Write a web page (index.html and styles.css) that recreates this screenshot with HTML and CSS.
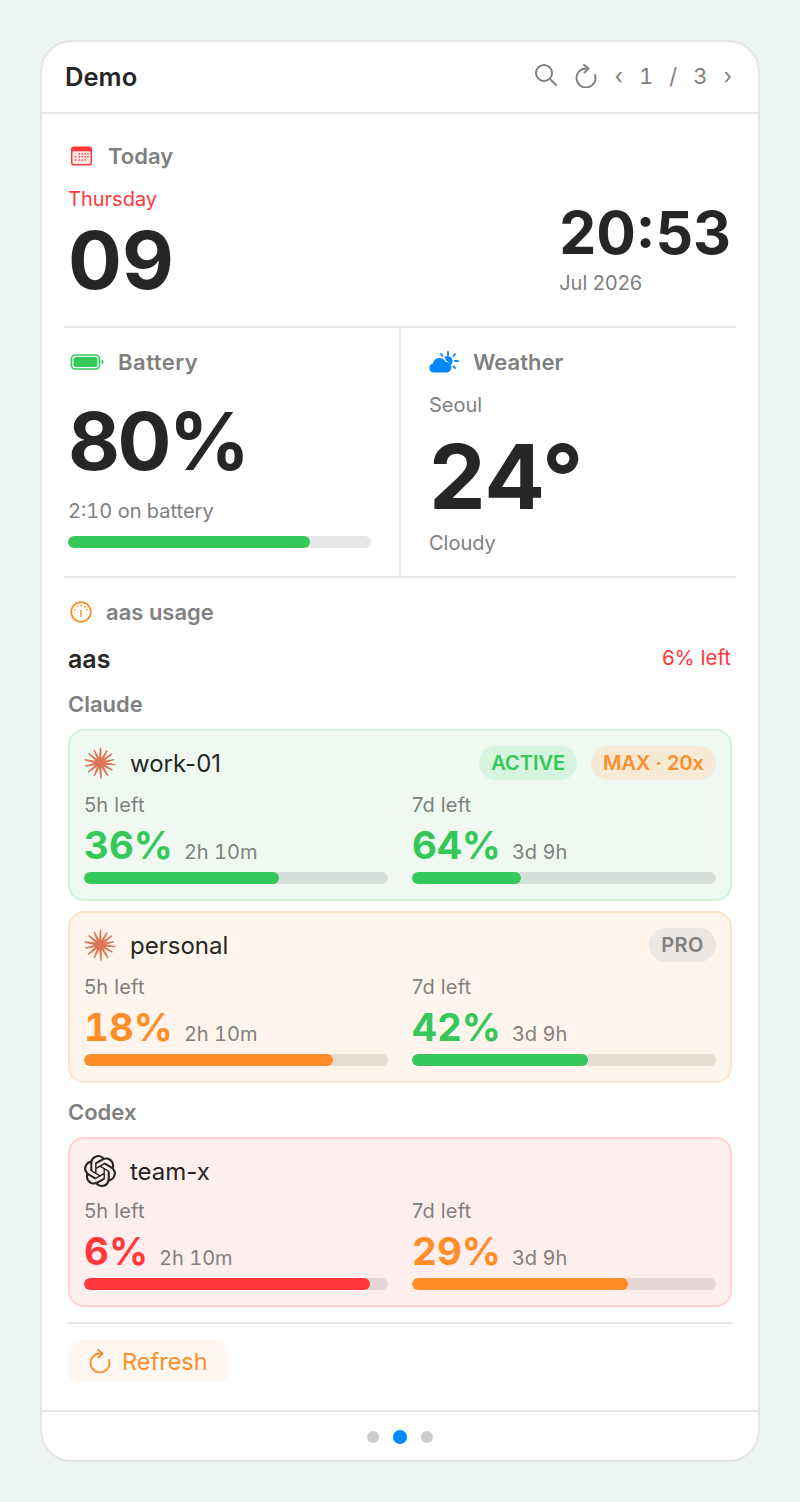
FILE: index.html
```html
<!DOCTYPE html>
<html lang="en">
<head>
    <meta charset="UTF-8">
    <meta name="viewport" content="width=device-width, initial-scale=1.0">
    <title>Demo</title>
    <link rel="stylesheet" href="styles.css">
</head>
<body>
    <svg class="defs" width="0" height="0">
        <symbol id="claude-star" viewBox="0 0 32 32">
            <g fill="#d97757">
                <path transform="rotate(2 16 16)" d="M14.5 16 15.3 .9Q16 .3 16.7 .9L17.5 16Z"/>
                <path transform="rotate(30 16 16)" d="M14.5 16 15.3 1.8Q16 1.2 16.7 1.8L17.5 16Z"/>
                <path transform="rotate(52 16 16)" d="M14.5 16 15.3 .9Q16 .3 16.7 .9L17.5 16Z"/>
                <path transform="rotate(76 16 16)" d="M14.5 16 15.3 1.8Q16 1.2 16.7 1.8L17.5 16Z"/>
                <path transform="rotate(96 16 16)" d="M14.5 16 15.3 .6Q16 0 16.7 .6L17.5 16Z"/>
                <path transform="rotate(120 16 16)" d="M14.5 16 15.3 1.8Q16 1.2 16.7 1.8L17.5 16Z"/>
                <path transform="rotate(148 16 16)" d="M14.5 16 15.3 .9Q16 .3 16.7 .9L17.5 16Z"/>
                <path transform="rotate(176 16 16)" d="M14.5 16 15.3 .6Q16 0 16.7 .6L17.5 16Z"/>
                <path transform="rotate(204 16 16)" d="M14.5 16 15.3 1.8Q16 1.2 16.7 1.8L17.5 16Z"/>
                <path transform="rotate(232 16 16)" d="M14.5 16 15.3 .9Q16 .3 16.7 .9L17.5 16Z"/>
                <path transform="rotate(258 16 16)" d="M14.5 16 15.3 .9Q16 .3 16.7 .9L17.5 16Z"/>
                <path transform="rotate(282 16 16)" d="M14.5 16 15.3 .6Q16 0 16.7 .6L17.5 16Z"/>
                <path transform="rotate(310 16 16)" d="M14.5 16 15.3 1.2Q16 .6 16.7 1.2L17.5 16Z"/>
                <path transform="rotate(336 16 16)" d="M14.5 16 15.3 1.8Q16 1.2 16.7 1.8L17.5 16Z"/>
            </g>
        </symbol>
        <symbol id="reload" viewBox="0 0 22 24">
            <path d="M11 4.5A9.5 9.5 0 1 0 20 11" fill="none" stroke="currentColor" stroke-width="1.9" stroke-linecap="round"/>
            <path d="M9 .8 13.5 4.5 9.5 8.5" fill="none" stroke="currentColor" stroke-width="1.9" stroke-linecap="round" stroke-linejoin="round"/>
        </symbol>
    </svg>

    <div class="widget">
        <div class="topbar">
            <h1>Demo</h1>
            <div class="topbar-tools">
                <svg class="tool-icon search-icon" viewBox="1 1 22 22" fill="none" stroke="#808080" stroke-width="2" stroke-linecap="round">
                    <circle cx="10" cy="10" r="8"/>
                    <line x1="16" y1="16" x2="22" y2="22"/>
                </svg>
                <svg class="tool-icon reload-icon"><use href="#reload"/></svg>
                <div class="pager">
                    <span>‹</span><span>1</span><span>/</span><span>3</span><span>›</span>
                </div>
            </div>
        </div>

        <div class="content">
            <div class="today">
                <div class="section-title">
                    <svg class="icon-calendar" viewBox="0 0 22 20">
                        <rect x="0" y="0" width="22" height="20" rx="3" fill="#ff383c"/>
                        <rect x="1.5" y="5" width="19" height="13.5" rx="1.5" fill="#ffe9e9"/>
                        <g fill="#ff383c">
                            <rect x="8" y="7" width="1.5" height="1.5"/><rect x="11" y="7" width="1.5" height="1.5"/><rect x="14" y="7" width="1.5" height="1.5"/><rect x="17" y="7" width="1.5" height="1.5"/>
                            <rect x="4" y="10" width="1.5" height="1.5"/><rect x="8" y="10" width="1.5" height="1.5"/><rect x="11" y="10" width="1.5" height="1.5"/><rect x="14" y="10" width="1.5" height="1.5"/><rect x="17" y="10" width="1.5" height="1.5"/>
                            <rect x="4" y="13.5" width="1.5" height="1.5"/><rect x="8" y="13.5" width="1.5" height="1.5"/><rect x="11" y="13.5" width="1.5" height="1.5"/><rect x="14" y="13.5" width="1.5" height="1.5"/>
                        </g>
                    </svg>
                    <span>Today</span>
                </div>
                <div class="today-body">
                    <div>
                        <div class="weekday">Thursday</div>
                        <div class="day-num">09</div>
                    </div>
                    <div class="today-right">
                        <div class="clock">20:53</div>
                        <div class="month">Jul 2026</div>
                    </div>
                </div>
            </div>

            <div class="split">
                <div class="split-cell battery">
                    <div class="section-title">
                        <svg class="icon-battery" viewBox="0 0 33 16">
                            <rect x="1" y="1" width="28" height="14" rx="4" fill="none" stroke="#34c759" stroke-width="1.6"/>
                            <rect x="3" y="3" width="24" height="10" rx="2.2" fill="#34c759"/>
                            <path d="M31 5.5 C32.5 6 33 7 33 8 C33 9 32.5 10 31 10.5Z" fill="#34c759"/>
                        </svg>
                        <span class="battery-label">Battery</span>
                    </div>
                    <div class="big-num">80%</div>
                    <div class="muted battery-note">2:10 on battery</div>
                    <div class="track battery-track"><div class="fill green" style="width: 80%"></div></div>
                </div>
                <div class="split-cell weather">
                    <div class="section-title weather-title">
                        <svg class="icon-weather" viewBox="0 0 30 22">
                            <g stroke="#0088ff" stroke-width="1.8" stroke-linecap="round">
                                <line x1="19" y1="1" x2="19" y2="4"/>
                                <line x1="12" y1="3" x2="13.5" y2="5"/>
                                <line x1="26" y1="3" x2="24.5" y2="5"/>
                                <line x1="29" y1="10" x2="26" y2="10"/>
                                <line x1="26" y1="17" x2="24.5" y2="15.5"/>
                            </g>
                            <path d="M15 6.5a5 5 0 0 1 8.5 4 5 5 0 0 1-2.7 4.4 5 5 0 0 0-3.3-5 6.5 6.5 0 0 0-2.5-3.4z" fill="#0088ff"/>
                            <path d="M5 21.5a4.6 4.6 0 0 1-1-9.1 6.6 6.6 0 0 1 12.6-1.4 5.3 5.3 0 0 1 1.4 10.5z" fill="#0088ff"/>
                        </svg>
                        <span>Weather</span>
                    </div>
                    <div class="muted city">Seoul</div>
                    <div class="big-num temp">24°</div>
                    <div class="muted">Cloudy</div>
                </div>
            </div>

            <div class="usage">
                <div class="section-title usage-title">
                    <svg class="icon-gauge" viewBox="0 0 22 22" fill="none">
                        <circle cx="11" cy="11" r="9.8" stroke="#ff8d28" stroke-width="1.8"/>
                        <path d="M10.2 9h1.6L11.6 16h-1.2z" fill="#ff8d28"/>
                        <g fill="#ff8d28">
                            <circle cx="11" cy="4.6" r=".9"/><circle cx="7.4" cy="5.6" r=".9"/><circle cx="14.6" cy="5.6" r=".9"/><circle cx="5" cy="8.6" r=".9"/><circle cx="17" cy="8.6" r=".9"/>
                        </g>
                    </svg>
                    <span>aas usage</span>
                </div>
                <div class="usage-head">
                    <strong>aas</strong>
                    <span class="left-total">6% left</span>
                </div>

                <div class="group-label">Claude</div>
                <div class="account account-green">
                    <div class="account-head">
                        <svg class="account-logo"><use href="#claude-star"/></svg>
                        <span class="account-name">work-01</span>
                        <span class="pill pill-active">ACTIVE</span>
                        <span class="pill pill-max">MAX · 20x</span>
                    </div>
                    <div class="limits">
                        <div>
                            <div class="limit-label">5h left</div>
                            <div class="limit-value"><b class="text-green">36%</b><span>2h 10m</span></div>
                            <div class="track"><div class="fill green" style="width: 64%"></div></div>
                        </div>
                        <div>
                            <div class="limit-label">7d left</div>
                            <div class="limit-value"><b class="text-green">64%</b><span>3d 9h</span></div>
                            <div class="track"><div class="fill green" style="width: 36%"></div></div>
                        </div>
                    </div>
                </div>
                <div class="account account-orange">
                    <div class="account-head">
                        <svg class="account-logo"><use href="#claude-star"/></svg>
                        <span class="account-name">personal</span>
                        <span class="pill pill-pro">PRO</span>
                    </div>
                    <div class="limits">
                        <div>
                            <div class="limit-label">5h left</div>
                            <div class="limit-value"><b class="text-orange">18%</b><span>2h 10m</span></div>
                            <div class="track"><div class="fill orange" style="width: 82%"></div></div>
                        </div>
                        <div>
                            <div class="limit-label">7d left</div>
                            <div class="limit-value"><b class="text-green">42%</b><span>3d 9h</span></div>
                            <div class="track"><div class="fill green" style="width: 58%"></div></div>
                        </div>
                    </div>
                </div>

                <div class="group-label codex-label">Codex</div>
                <div class="account account-red">
                    <div class="account-head">
                        <svg class="account-logo" viewBox="0 0 24 24"><path fill="#262626" d="M22.2819 9.8211a5.9847 5.9847 0 0 0-.5157-4.9108 6.0462 6.0462 0 0 0-6.5098-2.9A6.0651 6.0651 0 0 0 4.9807 4.1818a5.9847 5.9847 0 0 0-3.9977 2.9 6.0462 6.0462 0 0 0 .7427 7.0966 5.98 5.98 0 0 0 .511 4.9107 6.051 6.051 0 0 0 6.5146 2.9001A5.9847 5.9847 0 0 0 13.2599 24a6.0557 6.0557 0 0 0 5.7718-4.2058 5.9894 5.9894 0 0 0 3.9977-2.9001 6.0557 6.0557 0 0 0-.7475-7.0729zm-9.022 12.6081a4.4755 4.4755 0 0 1-2.8764-1.0408l.1419-.0804 4.7783-2.7582a.7948.7948 0 0 0 .3927-.6813v-6.7369l2.02 1.1686a.071.071 0 0 1 .038.052v5.5826a4.504 4.504 0 0 1-4.4945 4.4944zm-9.6607-4.1254a4.4708 4.4708 0 0 1-.5346-3.0137l.142.0852 4.783 2.7582a.7712.7712 0 0 0 .7806 0l5.8428-3.3685v2.3324a.0804.0804 0 0 1-.0332.0615L9.74 19.9502a4.4992 4.4992 0 0 1-6.1408-1.6464zM2.3408 7.8956a4.485 4.485 0 0 1 2.3655-1.9728V11.6a.7664.7664 0 0 0 .3879.6765l5.8144 3.3543-2.0201 1.1685a.0757.0757 0 0 1-.071 0l-4.8303-2.7865A4.504 4.504 0 0 1 2.3408 7.872zm16.5963 3.8558L13.1038 8.364 15.1192 7.2a.0757.0757 0 0 1 .071 0l4.8303 2.7913a4.4944 4.4944 0 0 1-.6765 8.1042v-5.6772a.79.79 0 0 0-.407-.667zm2.0107-3.0231l-.142-.0852-4.7735-2.7818a.7759.7759 0 0 0-.7854 0L9.409 9.2297V6.8974a.0662.0662 0 0 1 .0284-.0615l4.8303-2.7866a4.4992 4.4992 0 0 1 6.6802 4.66zM8.3065 12.863l-2.02-1.1638a.0804.0804 0 0 1-.038-.0567V6.0742a4.4992 4.4992 0 0 1 7.3757-3.4537l-.142.0805L8.704 5.459a.7948.7948 0 0 0-.3927.6813zm1.0976-2.3654l2.602-1.4998 2.6069 1.4998v2.9994l-2.5974 1.4997-2.6067-1.4997Z"/></svg>
                        <span class="account-name">team-x</span>
                    </div>
                    <div class="limits">
                        <div>
                            <div class="limit-label">5h left</div>
                            <div class="limit-value"><b class="text-red">6%</b><span>2h 10m</span></div>
                            <div class="track"><div class="fill red" style="width: 94%"></div></div>
                        </div>
                        <div>
                            <div class="limit-label">7d left</div>
                            <div class="limit-value"><b class="text-orange">29%</b><span>3d 9h</span></div>
                            <div class="track"><div class="fill orange" style="width: 71%"></div></div>
                        </div>
                    </div>
                </div>

                <div class="usage-foot">
                    <button class="refresh-btn">
                        <svg class="refresh-icon"><use href="#reload"/></svg>
                        Refresh
                    </button>
                </div>
            </div>
        </div>

        <div class="dots">
            <span class="dot"></span>
            <span class="dot dot-on"></span>
            <span class="dot"></span>
        </div>
    </div>
</body>
</html>
```

FILE: styles.css
```css
* {
    margin: 0;
    padding: 0;
    box-sizing: border-box;
}

body {
    font-family: Inter, 'Liberation Sans', sans-serif;
    background: #edf5f2;
    color: #262626;
    padding: 40px;
}

.defs {
    position: absolute;
}

.widget {
    height: 1422px;
    background: white;
    border: 2px solid #e5e5e5;
    border-radius: 32px;
    overflow: hidden;
    display: flex;
    flex-direction: column;
}

.topbar {
    height: 72px;
    flex: none;
    border-bottom: 2px solid #e5e5e5;
    padding: 0 26px 2px 23px;
    display: flex;
    align-items: center;
    justify-content: space-between;
}

.topbar h1 {
    font-size: 25.6px;
    font-weight: 600;
}

.topbar-tools {
    display: flex;
    align-items: center;
    color: #808080;
}

.tool-icon {
    width: 22px;
    height: 22px;
}

.search-icon {
    margin-right: 18px;
    margin-top: -3px;
}

.reload-icon {
    height: 24px;
    margin-right: 18px;
}

.pager {
    display: flex;
    align-items: center;
    gap: 16px;
    font-size: 22px;
    font-variant-numeric: tabular-nums;
}

.content {
    flex: 1;
    padding: 0 22px;
}

.section-title {
    display: flex;
    align-items: center;
    gap: 16px;
    color: #808080;
    font-size: 22px;
    font-weight: 600;
}

.weather-title {
    gap: 14px;
}

.battery-label {
    letter-spacing: 0.5px;
}

.today {
    height: 214px;
    border-bottom: 2px solid #e5e5e5;
    padding: 29px 5px 0 7px;
}

.icon-calendar {
    width: 21px;
    height: 20px;
}

.today-body {
    display: flex;
    justify-content: space-between;
    margin-top: 18px;
}

.weekday {
    color: #ff383c;
    font-size: 20px;
    margin-left: -3px;
}

.day-num {
    font-size: 80px;
    font-weight: 700;
    line-height: 88px;
    margin-left: -3px;
    margin-top: 5px;
}

.today-right {
    margin-top: 13px;
}

.clock {
    font-size: 58.8px;
    font-weight: 700;
    line-height: 66px;
}

.month {
    color: #808080;
    font-size: 20px;
    margin-top: 5px;
}

.split {
    height: 250px;
    display: grid;
    grid-template-columns: 337px 1fr;
    border-bottom: 2px solid #e5e5e5;
}

.split-cell {
    padding: 21px 0 0 4px;
}

.battery {
    border-right: 2px solid #e5e5e5;
    padding-right: 28px;
}

.weather {
    padding-left: 28px;
}

.icon-battery {
    width: 34px;
    height: 16px;
    margin-left: 2px;
    margin-right: -2px;
}

.icon-weather {
    width: 30px;
    height: 22px;
}

.big-num {
    font-size: 80px;
    font-weight: 700;
    line-height: 96px;
    letter-spacing: -2.6px;
    margin-top: 18px;
}

.muted {
    color: #808080;
    font-size: 20px;
}

.battery-note {
    margin-top: 10px;
    font-variant-numeric: tabular-nums;
}

.city {
    margin-top: 18px;
}

.temp {
    font-size: 90px;
    line-height: 100px;
    letter-spacing: 0;
    margin-top: 10px;
    margin-bottom: 4px;
}

.track {
    height: 12px;
    border-radius: 6px;
    background: rgba(0, 0, 0, 0.1);
    overflow: hidden;
}

.battery-track {
    margin-top: 13px;
}

.fill {
    height: 100%;
    border-radius: 6px;
}

.green { background: #34c759; }
.orange { background: #ff8d28; }
.red { background: #ff383c; }

.text-green { color: #34c759; }
.text-orange { color: #ff8d28; }
.text-red { color: #ff383c; }

.usage {
    padding: 0 4px;
}

.usage-title {
    padding-top: 21px;
    gap: 14px;
}

.icon-gauge {
    width: 22px;
    height: 22px;
    margin-left: 2px;
}

.usage-head {
    display: flex;
    justify-content: space-between;
    align-items: center;
    margin-top: 19px;
}

.usage-head strong {
    font-size: 25px;
    font-weight: 600;
}

.left-total {
    color: #ff383c;
    font-size: 20.5px;
    margin-top: -3px;
    margin-right: 1px;
}

.group-label {
    color: #808080;
    font-size: 22px;
    font-weight: 600;
    margin-top: 17px;
    margin-bottom: 12px;
}

.codex-label {
    margin-top: 16px;
}

.account {
    height: 172px;
    border: 2px solid;
    border-radius: 16px;
    padding: 0 14px;
    margin-bottom: 10px;
}

.account-green {
    background: #eff9f2;
    border-color: #d0f2da;
}

.account-orange {
    background: #fff5ec;
    border-color: #ffe4cc;
}

.account-red {
    height: 170px;
    margin-bottom: 0;
    background: #ffeeee;
    border-color: #ffd1d2;
}

.account-head {
    height: 64px;
    display: flex;
    align-items: center;
    gap: 14px;
}

.account-red .account-head {
    margin-bottom: -2px;
}

.account-logo {
    width: 32px;
    height: 32px;
    flex: none;
}

.account-name {
    font-size: 24px;
    flex: 1;
}

.pill {
    height: 34px;
    line-height: 34px;
    border-radius: 17px;
    padding: 0 12px;
    font-size: 20px;
    font-weight: 600;
}

.pill-active {
    color: #34c759;
    background: #d6f4de;
}

.pill-max {
    color: #ff8d28;
    background: #f5ead6;
}

.pill-pro {
    color: #808080;
    background: #ebe6e1;
    letter-spacing: 0.5px;
}

.limits {
    display: grid;
    grid-template-columns: 304px 304px;
    gap: 24px;
}

.limit-label {
    color: #808080;
    font-size: 20px;
    letter-spacing: 0.2px;
    line-height: 24px;
    margin-top: -2px;
}

.limit-value {
    display: flex;
    align-items: baseline;
    gap: 11px;
    height: 44px;
    margin-top: 6px;
    margin-bottom: 5px;
    color: #808080;
    font-size: 20px;
    font-variant-numeric: tabular-nums;
}

.limit-value b {
    font-size: 38.5px;
    font-weight: 700;
    line-height: 44px;
}

.usage-foot {
    margin-top: 15px;
    border-top: 2px solid #e5e5e5;
    padding-top: 16px;
}

.refresh-btn {
    display: flex;
    align-items: center;
    gap: 11px;
    width: 160px;
    height: 42px;
    padding-left: 21px;
    border: none;
    border-radius: 10px;
    background: #fff8f2;
    color: #ff8d28;
    font-family: inherit;
    font-size: 23.5px;
}

.refresh-icon {
    width: 22px;
    height: 24px;
}

.dots {
    height: 50px;
    flex: none;
    border-top: 2px solid #e5e5e5;
    padding-top: 2px;
    display: flex;
    align-items: center;
    justify-content: center;
    gap: 14px;
}

.dot {
    width: 12px;
    height: 12px;
    border-radius: 50%;
    background: #cccccc;
}

.dot-on {
    width: 14px;
    height: 14px;
    background: #0088ff;
}
```
